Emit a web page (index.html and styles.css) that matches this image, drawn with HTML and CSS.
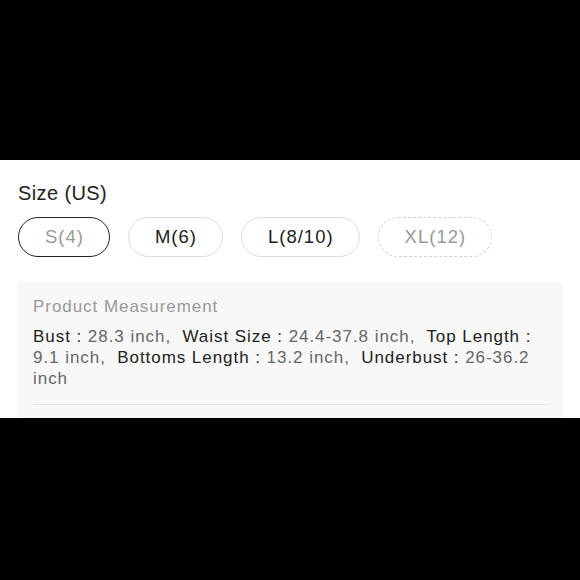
FILE: index.html
```html
<!DOCTYPE html>
<html>
<head>
<meta charset="utf-8">
<link rel="stylesheet" href="styles.css">
</head>
<body>
<section class="panel">
  <h2 class="title">Size (US)</h2>
  <div class="sizes">
    <span class="pill selected">S(4)</span>
    <span class="pill">M(6)</span>
    <span class="pill">L(8/10)</span>
    <span class="pill disabled">XL(12)</span>
  </div>
  <div class="measure">
    <div class="measure-title">Product Measurement</div>
    <p class="measure-text"><span class="lbl">Bust : </span><span class="val">28.3 inch,</span>&nbsp; <span class="lbl">Waist Size : </span><span class="val">24.4-37.8 inch,</span>&nbsp; <span class="lbl">Top Length : </span><span class="val">9.1 inch,</span>&nbsp; <span class="lbl">Bottoms Length : </span><span class="val">13.2 inch,</span>&nbsp; <span class="lbl">Underbust : </span><span class="val">26-36.2 inch</span></p>
  </div>
</section>
</body>
</html>
```
FILE: styles.css
```css
html, body {
  margin: 0;
  padding: 0;
  background: #000;
  height: 580px;
  overflow: hidden;
}
body {
  font-family: "Liberation Sans", Arial, sans-serif;
  color: #222;
}
.panel {
  margin-top: 160px;
  height: 258px;
  overflow: hidden;
  background: #fff;
  padding: 21px 18px 0;
  box-sizing: border-box;
}
.title {
  margin: 0;
  font-size: 20px;
  line-height: 24px;
  font-weight: normal;
  color: #222;
  letter-spacing: 0.4px;
}
.sizes {
  display: flex;
  gap: 18px;
  margin-top: 12px;
}
.pill {
  box-sizing: border-box;
  height: 40px;
  padding: 0 25px 0 26px;
  border: 1px solid #ddd;
  border-radius: 20px;
  display: flex;
  align-items: center;
  font-size: 18.5px;
  color: #222;
  letter-spacing: 1px;
}
.pill.selected {
  border: 1.5px solid #222;
  color: #999;
}
.pill.disabled {
  border: 1.5px dashed #d2d2d2;
  color: #999;
}
.measure {
  margin-top: 25px;
  background: #f8f8f8;
  padding: 15px 15px 0;
  height: 200px;
}
.measure-title {
  font-size: 17px;
  line-height: 20px;
  color: #999;
  letter-spacing: 0.95px;
}
.measure-text {
  margin: 9px 0 0;
  font-size: 17px;
  line-height: 21px;
  letter-spacing: 0.95px;
  padding-bottom: 15px;
  border-bottom: 1px solid #e6e6e6;
}
.lbl { color: #222; }
.val { color: #666; }
```
